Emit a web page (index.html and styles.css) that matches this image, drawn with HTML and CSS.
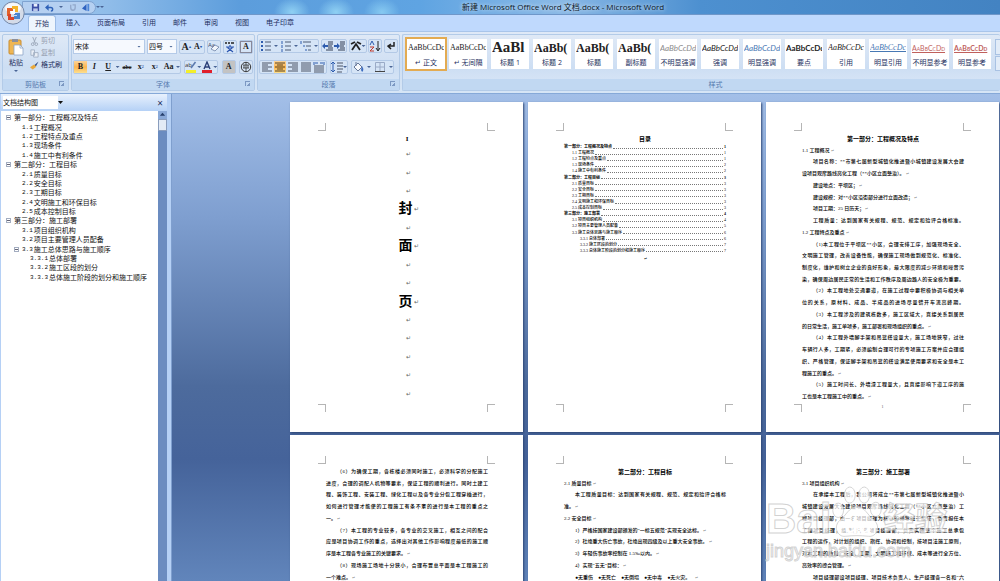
FILE: index.html
```html
<!DOCTYPE html>
<html lang="zh-CN">

<head>
    <meta charset="UTF-8">
    <meta name="viewport" content="width=device-width, initial-scale=1.0">
    <title>新建 Microsoft Office Word 文档.docx - Microsoft Word</title>
    <link rel="stylesheet" href="styles.css">
</head>

<body>
    <header class="top">
        <button class="office" aria-label="Office">
            <svg viewBox="0 0 24 24" width="24" height="24">
                <circle cx="12" cy="12" r="11.2" fill="#d4dbe8" stroke="#7488a8" />
                <ellipse cx="12" cy="7" rx="8" ry="5" fill="#f5f7fb" />
                <path d="M6 7h6v3H9v5H6z" fill="#e2622a" />
                <path d="M11 5h6v6h-3V8h-3z" fill="#f3b52c" />
                <path d="M7 13h3v3h3v3H7z" fill="#d9452a" />
                <path d="M13 12h6v6h-6v-3h3v-1h-3z" fill="#4a86cf" />
                <path d="M10 10h4v3h-4z" fill="#fff" />
            </svg>
        </button>
        <div class="titlebar">
            <div class="quick">
                <button aria-label="保存"><svg viewBox="0 0 10 10" width="9" height="9"><path d="M1 1h8v8H1z" fill="#3b4fa5" /><path d="M3 1h4v3H3z" fill="#e8eefc" /><path d="M2.500 6h5v3h-5z" fill="#b9c7ea" /></svg></button>
                <button aria-label="撤消"><svg viewBox="0 0 10 10" width="9" height="9"><path d="M2 5h4.500q2 0 2 2t-2 2" fill="none" stroke="#2f62b8" stroke-width="1.600" /><path d="M0 5l4-3.500v7z" fill="#2f62b8" /></svg></button>
                <i class="caret"></i>
                <button aria-label="恢复"><svg viewBox="0 0 10 10" width="9" height="9"><path d="M3 2v3q0 3 2.500 3T8 5V2H5" fill="none" stroke="#93a9cb" stroke-width="1.500" /></svg></button>
                <button aria-label="朗读"><svg viewBox="0 0 10 10" width="9" height="9"><path d="M0 6l5-5v8z" fill="#2f62c0" /><path d="M6 1h2v8H6z" fill="#4e86d8" /></svg></button>
                <i class="caret"></i>
            </div>
            <i class="caret more"></i>
            <h1>新建 Microsoft Office Word 文档.docx - Microsoft Word</h1>
        </div>
        <nav class="tabs">
            <a href="#" class="on">开始</a>
            <a href="#">插入</a>
            <a href="#">页面布局</a>
            <a href="#">引用</a>
            <a href="#">邮件</a>
            <a href="#">审阅</a>
            <a href="#">视图</a>
            <a href="#">电子印章</a>
        </nav>
    </header>

    <div class="ribbon">
        <section class="group clipboard">
            <div class="tools">
                <button class="paste">
                    <svg viewBox="0 0 16 18" width="16" height="18"><rect x="1" y="2" width="12" height="14" rx="1" fill="#efb653" stroke="#c98c2f" /><path d="M4 1h6v3H4z" fill="#8c8f9b" /><path d="M6 7h6l3 3v7H6z" fill="#fff" stroke="#8ea4c8" stroke-width=".8" /><path d="M12 7v3h3" fill="none" stroke="#8ea4c8" stroke-width=".8" /></svg>
                    <span>粘贴</span>
                    <i class="caret"></i>
                </button>
                <div class="stack">
                    <button class="off"><svg viewBox="0 0 10 10" width="9" height="9"><path d="M3 0l3 7M7 0L4 7" stroke="#9aa6b8" fill="none" /><circle cx="3" cy="8" r="1.500" fill="none" stroke="#9aa6b8" /><circle cx="7" cy="8" r="1.500" fill="none" stroke="#9aa6b8" /></svg>剪切</button>
                    <button class="off"><svg viewBox="0 0 10 10" width="9" height="9"><path d="M1 1h4v6H1zM4 4h5v5H4z" fill="#e9eef6" stroke="#a3b0c4" /></svg>复制</button>
                    <button><svg viewBox="0 0 10 10" width="9" height="9"><path d="M9.500.500L5 4.500l1.500 1.500z" fill="#2f4e88" /><path d="M4.500 4L7 6.500 3 9.500 0 7z" fill="#e9a93c" /></svg>格式刷</button>
                </div>
            </div>
            <h2>剪贴板<i class="launch"></i></h2>
        </section>

        <section class="group font">
            <div class="tools rows">
                <div class="row">
                    <label class="combo wide"><select aria-label="字体"><option>宋体</option></select><i class="caret"></i></label>
                    <label class="combo"><select aria-label="字号"><option>四号</option></select><i class="caret"></i></label>
                    <div class="set">
                        <button class="serif big">A<sup>▴</sup></button>
                        <button class="serif">A<sup>▾</sup></button>
                    </div>
                    <div class="set"><button aria-label="清除格式"><svg viewBox="0 0 12 12" width="12" height="12"><text x="0" y="6" font-size="6" fill="#3a4a6a">Aa</text><path d="M3 8l4-4 4 2-4 4z" fill="#f2f5fb" stroke="#6a7fa5" stroke-width=".8" /></svg></button></div>
                    <div class="set"><button aria-label="拼音指南"><svg viewBox="0 0 12 12" width="12" height="12"><path d="M1 2h2M4 2h2M7 2h3" stroke="#222" stroke-width="1.500" /><path d="M6 4v1.500M2 6h8M3.500 6.500L9 11M8.500 6.500L3 11" stroke="#2b55b0" stroke-width="1.200" fill="none" /></svg></button></div>
                    <div class="set"><button class="serif boxed">A</button></div>
                </div>
                <div class="row">
                    <div class="set fill">
                        <button class="serif on">B</button>
                        <button class="serif"><em>I</em></button>
                        <button class="serif"><u>U</u></button>
                        <i class="caret"></i>
                        <button class="serif"><s>abc</s></button>
                        <button class="serif">x<sub>2</sub></button>
                        <button class="serif">x<sup>2</sup></button>
                        <button class="serif">Aa</button>
                        <i class="caret"></i>
                    </div>
                    <div class="set">
                        <button aria-label="突出显示"><svg viewBox="0 0 12 12" width="12" height="12"><text x="0" y="6" font-size="6" fill="#333">ab</text><path d="M10.500 1L6 7" stroke="#5b79ad" stroke-width="1.600" /><path d="M1 9h10v3H1z" fill="#f3ee2b" /></svg></button>
                        <i class="caret"></i>
                        <button aria-label="字体颜色"><svg viewBox="0 0 12 12" width="12" height="12"><path d="M3 8l3-7 3 7M4 6h4" fill="none" stroke="#2b3f78" stroke-width="1.400" /><path d="M1 9h10v3H1z" fill="#e0202c" /></svg></button>
                        <i class="caret"></i>
                    </div>
                    <div class="set"><button class="serif shade">A</button></div>
                    <div class="set"><button aria-label="带圈字符"><svg viewBox="0 0 12 12" width="12" height="12"><circle cx="6" cy="6" r="4.700" fill="none" stroke="#333" /><path d="M3 4h6M6 2v8M3 7h6M4 4v3M8 4v3" stroke="#333" stroke-width=".8" /></svg></button></div>
                </div>
            </div>
            <h2>字体<i class="launch"></i></h2>
        </section>

        <section class="group para">
            <div class="tools rows">
                <div class="row">
                    <div class="set fill">
                        <button aria-label="项目符号"><svg viewBox="0 0 12 12" width="12" height="12"><path d="M1 2h2M1 6h2M1 10h2" stroke="#2e5cae" stroke-width="2" /><path d="M5 2h6M5 6h6M5 10h6" stroke="#4c5a74" /></svg></button><i class="caret"></i>
                        <button aria-label="编号"><svg viewBox="0 0 12 12" width="12" height="12"><path d="M2 1v3M2 5v3M2 9v3" stroke="#2e5cae" /><path d="M5 2h6M5 6h6M5 10h6" stroke="#4c5a74" /></svg></button><i class="caret"></i>
                        <button aria-label="多级列表"><svg viewBox="0 0 12 12" width="12" height="12"><path d="M1 1v3M4 5v2M6 9v2" stroke="#2e5cae" /><path d="M3 2h8M6 6h5M8 10h3" stroke="#4c5a74" /></svg></button><i class="caret"></i>
                    </div>
                    <div class="set">
                        <button aria-label="减少缩进量"><svg viewBox="0 0 12 12" width="12" height="12"><path d="M6 2h5M6 4h5M6 6h4M6 8h5M4 10h7" stroke="#333d52" /><path d="M0 6l3-3v2h3v2H3v2z" fill="#2e5cae" /></svg></button>
                        <button aria-label="增加缩进量"><svg viewBox="0 0 12 12" width="12" height="12"><path d="M6 2h5M6 4h5M6 6h4M6 8h5M4 10h7" stroke="#333d52" /><path d="M6 6L3 3v2H0v2h3v2z" fill="#2e5cae" /></svg></button>
                    </div>
                    <div class="set"><button aria-label="中文版式"><svg viewBox="0 0 12 12" width="12" height="12"><path d="M1 4l4-2M11 4L7 2M2 10l4-6 4 6" fill="none" stroke="#222" stroke-width="1.800" /></svg></button><i class="caret"></i></div>
                    <div class="set"><button aria-label="排序"><svg viewBox="0 0 12 12" width="12" height="12"><path d="M1 5l2-4 2 4" fill="none" stroke="#2e5cae" /><path d="M1 7h4l-4 4h4" fill="none" stroke="#c0392b" /><path d="M9 1v9M7 8l2 3 2-3" fill="none" stroke="#222" /></svg></button></div>
                    <div class="set"><button aria-label="编辑标记"><svg viewBox="0 0 12 12" width="12" height="12"><path d="M9 2v4H4M6 4L3 6l3 3" fill="none" stroke="#222" stroke-width="1.500" /></svg></button></div>
                </div>
                <div class="row start">
                    <div class="set align">
                        <button aria-label="左对齐"><svg viewBox="0 0 12 12" width="12" height="12"><path d="M1 2h10M1 4h6M1 6h10M1 8h6M1 10h10" stroke="#4c5566" /></svg></button>
                        <button aria-label="居中" class="on"><svg viewBox="0 0 12 12" width="12" height="12"><path d="M1 2h10M3 4h6M1 6h10M3 8h6M1 10h10" stroke="#5a4420" /></svg></button>
                        <button aria-label="右对齐"><svg viewBox="0 0 12 12" width="12" height="12"><path d="M1 2h10M5 4h6M1 6h10M5 8h6M1 10h10" stroke="#4c5566" /></svg></button>
                        <button aria-label="两端对齐"><svg viewBox="0 0 12 12" width="12" height="12"><path d="M1 2h10M1 4h10M1 6h10M1 8h10M1 10h10" stroke="#4c5566" /></svg></button>
                        <button aria-label="分散对齐"><svg viewBox="0 0 12 12" width="12" height="12"><path d="M1 5h10M1 7h10M1 9h10M1 11h10" stroke="#4c5566" /><path d="M1 1v3M11 1v3M2 2h3M7 2h3" stroke="#2e5cae" /></svg></button>
                    </div>
                    <div class="set"><button aria-label="行距"><svg viewBox="0 0 12 12" width="12" height="12"><path d="M2 1v10M0 3l2-2 2 2M0 9l2 2 2-2" fill="none" stroke="#2e5cae" /><path d="M6 2h6M6 5h6M6 8h6M6 11h5" stroke="#4c5566" /></svg></button><i class="caret"></i></div>
                    <div class="set pair">
                        <button aria-label="底纹"><svg viewBox="0 0 12 12" width="12" height="12"><path d="M2 6l4-4 4 4-4 4z" fill="#f7f9fd" stroke="#68799a" /><path d="M4 1v4" stroke="#68799a" /><path d="M10 5q2 3 1 5t-2-1z" fill="#3c6cc0" /></svg></button><i class="caret"></i>
                        <button aria-label="边框"><svg viewBox="0 0 12 12" width="12" height="12"><path d="M1.500 1.500h9v9h-9zM6 1.500v9M1.500 6h9" fill="none" stroke="#9aaac6" /><path d="M1 10.500h10" stroke="#444" /></svg></button><i class="caret"></i>
                    </div>
                </div>
            </div>
            <h2>段落<i class="launch"></i></h2>
        </section>

        <section class="group styles">
            <div class="gallery">
                <button class="style on"><span class="sample">AaBbCcDc</span><span>↵ 正文</span></button>
                <button class="style"><span class="sample">AaBbCcDc</span><span>↵ 无间隔</span></button>
                <button class="style"><span class="sample h1">AaBl</span><span>标题 1</span></button>
                <button class="style"><span class="sample h2">AaBb(</span><span>标题 2</span></button>
                <button class="style"><span class="sample h2">AaBb(</span><span>标题</span></button>
                <button class="style"><span class="sample h2">AaBb(</span><span>副标题</span></button>
                <button class="style"><span class="sample sans it grey">AaBbCcDd</span><span>不明显强调</span></button>
                <button class="style"><span class="sample sans it">AaBbCcDd</span><span>强调</span></button>
                <button class="style"><span class="sample sans it blue">AaBbCcDd</span><span>明显强调</span></button>
                <button class="style"><span class="sample sans bold">AaBbCcDd</span><span>要点</span></button>
                <button class="style"><span class="sample it">AaBbCcDc</span><span>引用</span></button>
                <button class="style"><span class="sample it blue line">AaBbCcDc</span><span>明显引用</span></button>
                <button class="style"><span class="sample sans caps red line">AaBbCcDd</span><span>不明显参考</span></button>
                <button class="style"><span class="sample sans caps red deep line">AaBbCcDd</span><span>明显参考</span></button>
                <div class="scroll"><i></i><i></i></div>
            </div>
            <h2>样式</h2>
        </section>
    </div>

    <main class="work">
        <aside class="map">
            <div class="map-head">
                <label class="pick"><select aria-label="窗格"><option>文档结构图</option></select></label>
                <i class="caret"></i>
                <button class="close" aria-label="关闭">×</button>
            </div>
            <div class="map-body">
                <ul class="tree">
                    <li><b class="box"></b>第一部分：工程概况及特点</li>
                    <li class="l2"><span>1.1</span>工程概况</li>
                    <li class="l2"><span>1.2</span>工程特点及重点</li>
                    <li class="l2"><span>1.3</span>现场条件</li>
                    <li class="l2"><span>1.4</span>施工中有利条件</li>
                    <li><b class="box"></b>第二部分：工程目标</li>
                    <li class="l2"><span>2.1</span>质量目标</li>
                    <li class="l2"><span>2.2</span>安全目标</li>
                    <li class="l2"><span>2.3</span>工期目标</li>
                    <li class="l2"><span>2.4</span>文明施工和环保目标</li>
                    <li class="l2"><span>2.5</span>成本控制目标</li>
                    <li><b class="box"></b>第三部分：施工部署</li>
                    <li class="l2"><span>3.1</span>项目组织机构</li>
                    <li class="l2"><span>3.2</span>项目主要管理人员配备</li>
                    <li class="l2 open"><b class="box"></b><span>3.3</span>施工总体思路与施工顺序</li>
                    <li class="l3"><span>3.3.1</span>总体部署</li>
                    <li class="l3"><span>3.3.2</span>施工区段的划分</li>
                    <li class="l3"><span>3.3.3</span>总体施工阶段的划分和施工顺序</li>
                </ul>
                <div class="bar"><i class="up"></i><i class="thumb"></i></div>
            </div>
        </aside>

        <div class="canvas">
            <article class="page">
                <div class="marks"><i></i><i></i></div>
                <div class="cover">
                    <p class="cursor">I</p>
                    <p>↵</p>
                    <p>↵</p>
                    <p>↵</p>
                    <p><b>封</b>↵</p>
                    <p>↵</p>
                    <p><b>面</b>↵</p>
                    <p>↵</p>
                    <p>↵</p>
                    <p><b>页</b>↵</p>
                    <p>↵</p>
                    <p>↵</p>
                    <p>↵</p>
                    <p>↵</p>
                    <p>↵</p>
                </div>
                <div class="marks end"><i></i><i></i></div>
            </article>

            <article class="page">
                <div class="marks"><i></i><i></i></div>
                <div class="contents">
                    <h3>目录</h3>
                    <ol class="toc">
                        <li class="t1">第一部分：工程概况及特点<i></i>1</li>
                        <li class="t2">1.1 工程概况<i></i>1</li>
                        <li class="t2">1.2 工程特点及重点<i></i>1</li>
                        <li class="t2">1.3 现场条件<i></i>2</li>
                        <li class="t2">1.4 施工中有利条件<i></i>2</li>
                        <li class="t1">第二部分：工程目标<i></i>3</li>
                        <li class="t2">2.1 质量目标<i></i>3</li>
                        <li class="t2">2.2 安全目标<i></i>3</li>
                        <li class="t2">2.3 工期目标<i></i>3</li>
                        <li class="t2">2.4 文明施工和环保目标<i></i>3</li>
                        <li class="t2">2.5 成本控制目标<i></i>3</li>
                        <li class="t1">第三部分：施工部署<i></i>4</li>
                        <li class="t2">3.1 项目组织机构<i></i>4</li>
                        <li class="t2">3.2 项目主要管理人员配备<i></i>5</li>
                        <li class="t2">3.3 施工总体思路与施工顺序<i></i>6</li>
                        <li class="t3">3.3.1 总体部署<i></i>6</li>
                        <li class="t3">3.3.2 施工区段的划分<i></i>7</li>
                        <li class="t3">3.3.3 总体施工阶段的划分和施工顺序<i></i>7</li>
                    </ol>
                    <p class="ret">↵</p>
                </div>
                <div class="marks end"><i></i><i></i></div>
            </article>

            <article class="page">
                <div class="marks"><i></i><i></i></div>
                <div class="text">
                    <h3>第一部分：工程概况及特点</h3>
                    <p>1.1 工程概况</p>
                    <p class="in full">项目名称：**市第七届新型城镇化推进暨小城镇建设发展大会建</p>
                    <p>设项目观摩路线亮化工程（**小区立面整治）。</p>
                    <p class="in">建设地点：平坝区；</p>
                    <p class="in">建设规模：对**小区沿街部分进行立面改造；</p>
                    <p class="in">项目工期：25 日历天；</p>
                    <p class="in full">工程质量：达到国家有关规程、规范、规定和验评合格标准。</p>
                    <p>1.2 工程特点及重点</p>
                    <p class="in full">（1)本工程位于平坝区**小区，合理安排工序，加强现场安全、</p>
                    <p class="full">文明施工管理，改善设备性能，确保施工现场做到规范化、标准化、</p>
                    <p class="full">制度化，维护和树立企业的良好形象，最大限度的减少环境和噪音污</p>
                    <p class="full">染，确保周边居民正常的生活和工作秩序及周边路人的安全极为重要。</p>
                    <p class="in full">（2）本工程地处交通要道，在施工过程中要积极协调与相关单</p>
                    <p class="full">位的关系，原材料、成品、半成品的进场尽量错开车流高峰期。</p>
                    <p class="in full">（3）本工程涉及的建筑栋数多，施工区域大，直接关系到居民</p>
                    <p>的日常生活，施工单项多，施工部署和现场组织的重点。</p>
                    <p class="in full">（4）本工程外墙脚手架和吊篮搭设量大，施工场地狭窄，过往</p>
                    <p class="full">车辆行人多，工期紧，必须编制合理可行的专项施工方案并应合理组</p>
                    <p class="full">织、严格管理，保证脚手架和吊篮的搭设满足使用要求和安全是本工</p>
                    <p>程施工的重点。</p>
                    <p class="in full">（5）施工时间长、外墙漆工程量大，且直接影响下道工序的施</p>
                    <p>工也是本工程施工中的重点。</p>
                </div>
                <div class="marks end"><i></i><span>1</span><i></i></div>
            </article>

            <article class="page">
                <div class="marks"><i></i><i></i></div>
                <div class="text">
                    <p class="in full">（6）为确保工期，各栋楼必须同时施工，必须科学的分配施工</p>
                    <p class="full">进度，合理的调配人机物等要素，保证工程的顺利进行。同时土建工</p>
                    <p class="full">程、装饰工程、安装工程、绿化工程以及各专业分包工程穿插进行，</p>
                    <p class="full">如何进行管理才能使的工程施工有条不紊的进行是本工程的重点之</p>
                    <p>一。</p>
                    <p class="in full">（7）本工程的专业较多，各专业的交叉施工，相互之间的配合</p>
                    <p class="full">应是项目协调工作的重点，选择出对其他工作影响程度最低的施工顺</p>
                    <p>序是本工程各专业施工的关键要求。</p>
                    <p class="in full">（8）现场施工场地十分狭小，合理布置总平面是本工程施工的</p>
                    <p>一个难点。</p>
                </div>
            </article>

            <article class="page">
                <div class="marks"><i></i><i></i></div>
                <div class="text">
                    <h3>第二部分：工程目标</h3>
                    <p>2.1 质量目标</p>
                    <p class="in full">本工程质量目标：达到国家有关规程、规范、规定和验评合格标</p>
                    <p>准。</p>
                    <p>2.2 安全目标</p>
                    <p class="in">1）严格按国家建设部颁发的“一标五规范”实现安全达标。</p>
                    <p class="in">2）杜绝重大伤亡事故，杜绝出现四级及以上重大安全事故。</p>
                    <p class="in">3）年轻伤事故率控制在 1.5‰以内。</p>
                    <p class="in">4）实现“五无”目标：</p>
                    <p class="in dots"><span>●无重伤</span><span>●无死亡</span><span>●无倒塌</span><span>●无中毒</span><span>●无火灾。</span></p>
                </div>
            </article>

            <article class="page">
                <div class="marks"><i></i><i></i></div>
                <div class="text">
                    <h3>第三部分：施工部署</h3>
                    <p>3.1 项目组织机构</p>
                    <p class="in full">在承接本工程后，我公司将成立**市第七届新型城镇化推进暨小</p>
                    <p class="full">城镇建设发展大会建设项目观摩路线亮化工程（**小区立面整治）工</p>
                    <p class="full">程项目经理部，由一名项目经理为核心的领导班子组成，负责担任本</p>
                    <p class="full">工程项目经理，组建精干的项目经理部，负责实施整个施工总承包</p>
                    <p class="full">工程的运作，对计划的组织、指挥、协调和控制，按项目法施工原则，</p>
                    <p class="full">对本工程的质量、安全、工期、文明施工和环保、成本等进行全方位、</p>
                    <p>高效率的综合管理。</p>
                    <p class="in full">项目经理部设项目经理、项目技术负责人、生产经理各一名和“六</p>
                </div>
            </article>

            <div class="watermark">
                <div class="brand">
                    <span>Bai</span>
                    <svg viewBox="0 0 58 62" width="52" height="56">
                        <g fill="#fff" fill-opacity=".7" stroke="#c4c4c4" stroke-opacity=".8">
                            <ellipse cx="8" cy="28" rx="6" ry="8" />
                            <ellipse cx="21" cy="11" rx="6" ry="9" />
                            <ellipse cx="37" cy="11" rx="6" ry="9" />
                            <ellipse cx="50" cy="27" rx="6" ry="8" />
                            <path d="M29 24c9 0 12 10 19 15 8 7 3 19-6 18-9-1-17-1-26 0-9 1-14-11-6-18 7-5 10-15 19-15z" />
                        </g>
                        <text x="15" y="53" class="du">du</text>
                    </svg>
                    <span class="cn">经验</span>
                </div>
                <div class="site">jingyan.baidu.com</div>
            </div>
        </div>
    </main>
</body>

</html>
```

FILE: styles.css
```css
* {
    box-sizing: border-box;
    margin: 0;
    padding: 0;
}

body {
    display: flex;
    flex-direction: column;
    height: 100vh;
    overflow: hidden;
    font: 7px/10px "Open Sans", "Noto Sans CJK SC", sans-serif;
    color: #1d2f5e;
    background: #bfdbff;
}

button {
    display: flex;
    align-items: center;
    justify-content: center;
    border: 0;
    background: none;
    font: inherit;
    color: inherit;
}

i, em {
    font-style: normal;
}

em {
    font-style: italic;
}

ul, ol {
    list-style: none;
}

a {
    color: inherit;
    text-decoration: none;
}

.caret {
    flex: none;
    width: 4px;
    height: 2px;
    background: #4a6596;
    clip-path: polygon(0 0, 100% 0, 50% 100%);
}

/* title bar and tabs */
.top {
    position: relative;
    flex: none;
}

.office {
    position: absolute;
    left: 1px;
    top: 1px;
    z-index: 2;
}

.titlebar {
    display: flex;
    align-items: center;
    height: 15px;
    padding-left: 22px;
    border-bottom: 1px solid #6f97c9;
    background:
        radial-gradient(ellipse 18px 14px at 292px 12px, #8fd0f3, transparent),
        radial-gradient(ellipse 18px 14px at 336px 12px, #8fd0f3, transparent),
        radial-gradient(ellipse 18px 14px at 382px 12px, #86c9f1, transparent),
        linear-gradient(90deg, #a9cdf0 0, #8fbce9 110px, #5c9ddc 240px, #5fa4e2 420px, #8ab9e6 560px, #4d90d0 700px, #4383c2 1000px);
}

.quick {
    display: flex;
    align-items: center;
    gap: 5px;
    height: 13px;
    width: 74px;
    padding-left: 8px;
    border: 1px solid #7fa3d1;
    border-radius: 0 7px 7px 0;
    background: #b5d0f1;
}

.more {
    margin-left: 4px;
}

h1 {
    flex: 1;
    padding-left: 22px;
    font-size: 8px;
    font-weight: 400;
    line-height: 14px;
    text-align: center;
    color: #0d1828;
    text-shadow: 0 0 4px #fff;
}

.tabs {
    display: flex;
    gap: 3px;
    height: 16px;
    padding-left: 28px;
    line-height: 15px;
    background: #bfd9fd;
}

.tabs a {
    padding: 0 7px;
}

.tabs .on {
    border: 1px solid #9dbce6;
    border-bottom: 0;
    border-radius: 3px 3px 0 0;
    padding: 0 6px;
    background: #eef5fd;
}

/* ribbon */
.ribbon {
    display: flex;
    flex: none;
    gap: 2px;
    height: 63px;
    padding: 2px 0 2px 2px;
    border-top: 1px solid #a9c5ea;
    border-bottom: 1px solid #86a9d8;
    background: linear-gradient(#dfe9f7, #cfdff3 50%, #d6e5f6);
}

.group {
    display: flex;
    flex-direction: column;
    border: 1px solid #b3cbe8;
    border-radius: 2px;
    background: linear-gradient(#dfe9f6, #cddef3 60%, #dbe8f7);
}

.clipboard {
    width: 67px;
}

.font {
    width: 184px;
}

.para {
    width: 143px;
}

.styles {
    flex: 1;
    min-width: 0;
    border-right: 0;
}

h2 {
    position: relative;
    height: 11px;
    font-size: 7px;
    font-weight: 400;
    line-height: 11px;
    text-align: center;
    color: #5478ae;
    background: #c1d8f2;
}

.launch {
    position: absolute;
    right: 4px;
    top: 2px;
    width: 5px;
    height: 5px;
    border-top: 1px solid #7c98c2;
    border-left: 1px solid #7c98c2;
    background: linear-gradient(135deg, transparent 60%, #7c98c2 60%);
}

.tools {
    flex: 1;
    display: flex;
}

.paste {
    flex-direction: column;
    gap: 2px;
    width: 26px;
    padding-bottom: 4px;
}

.stack {
    display: flex;
    flex-direction: column;
    justify-content: space-between;
    padding: 1px 0 9px;
}

.stack button {
    justify-content: start;
    gap: 2px;
    padding-left: 1px;
}

.off {
    color: #97a0b0;
}

.rows {
    flex-direction: column;
    justify-content: space-between;
    padding: 4px 1px 5px;
}

.row {
    display: flex;
    justify-content: space-between;
    align-items: center;
}

.start {
    justify-content: start;
    gap: 3px;
}

.combo {
    display: flex;
    align-items: center;
    width: 30px;
    height: 15px;
    padding: 0 3px 0 1px;
    border: 1px solid #b4cae8;
    background: #f6f9fe;
}

.wide {
    width: 72px;
}

select {
    flex: 1;
    min-width: 0;
    border: 0;
    appearance: none;
    background: none;
    font: inherit;
    color: #111;
}

.set {
    display: flex;
    align-items: center;
    height: 14px;
    border: 1px solid #b3c9e6;
    border-radius: 2px;
    background: #d5e4f6;
}

.set button {
    width: 12px;
    height: 12px;
}

.set .on {
    background: linear-gradient(#fbd49a, #fbb550 50%, #fddf8e);
}

.font .fill {
    gap: 1px;
    width: 108px;
}

.font .fill button {
    flex: 1;
}

.serif {
    font: bold 8px/10px "Liberation Serif", serif;
    color: #222;
}

.serif sup,
.serif sub {
    font-size: 4px;
    line-height: 4px;
    color: #2e5cae;
}

.serif s {
    font-size: 6px;
}

.set .big {
    font-size: 10px;
}

.boxed {
    border: 1px solid #889;
}

.shade {
    background: #c3c3c3;
}

.para .fill {
    gap: 2px;
}

.align {
    gap: 1px;
    padding: 0 1px;
}

.pair {
    gap: 3px;
}

/* style gallery */
.gallery {
    flex: 1;
    display: flex;
    gap: 4px;
    padding: 4px 0 0 4px;
    overflow: hidden;
}

.style {
    flex: none;
    flex-direction: column;
    justify-content: space-between;
    width: 38px;
    height: 30px;
    padding-bottom: 1px;
    background: #fff;
    white-space: nowrap;
}

.styles .on {
    outline: 2px solid #e3ab52;
}

.sample {
    width: 36px;
    height: 16px;
    overflow: hidden;
    font: 8px/18px "Liberation Serif", serif;
    text-align: left;
    color: #222;
}

.h1 {
    font-size: 15px;
    font-weight: 700;
    line-height: 16px;
}

.h2 {
    font-size: 12px;
    font-weight: 700;
}

.sans {
    font-family: Lato, sans-serif;
}

.it {
    font-style: italic;
}

.bold {
    font-weight: 700;
}

.caps {
    font-size: 7px;
    font-variant: small-caps;
}

.grey {
    color: #8b8b8b;
}

.blue {
    color: #4778b4;
}

.red {
    color: #c0605c;
}

.deep {
    font-weight: 700;
}

.line {
    text-decoration: underline;
}

.scroll {
    flex: none;
    display: flex;
    flex-direction: column;
    gap: 1px;
    width: 8px;
    height: 32px;
}

.scroll i {
    flex: 1;
    border: 1px solid #a9c2e3;
    background: #e2ecf8;
}

.styles h2 {
    padding-left: 28px;
}

/* document map */
.work {
    flex: 1;
    display: flex;
    min-height: 0;
}

.map {
    flex: none;
    display: flex;
    flex-direction: column;
    width: 172px;
    padding: 0 4px 0 1px;
    border-right: 1px solid #7f9fce;
    background: #b5d0f5;
}

.map-head {
    display: flex;
    align-items: center;
    height: 17px;
    padding: 0 4px 0 2px;
    background: linear-gradient(#e8f1fd, #b5d1f6);
}

.map-head .caret {
    width: 5px;
    height: 3px;
    background: #111;
}

.pick {
    display: flex;
    width: 55px;
    height: 13px;
    background: #fff;
}

.close {
    margin-left: auto;
    font-size: 10px;
}

.map-body {
    flex: 1;
    display: flex;
    background: #fff;
}

.tree {
    flex: 1;
    display: grid;
    grid-auto-rows: 1fr;
    height: 169px;
    margin-top: 2px;
    padding-left: 5px;
    line-height: 9px;
    color: #111;
}

.tree li {
    display: flex;
    align-items: center;
    white-space: nowrap;
}

.tree span {
    padding-right: 1px;
    font: 6px/9px "Liberation Mono", monospace;
}

.box {
    width: 5px;
    height: 5px;
    margin-right: 3px;
    border: 1px solid #a3adc0;
    background: linear-gradient(#667 0 0) center / 3px 1px no-repeat;
}

.tree .l2 {
    padding-left: 16px;
}

.tree .open {
    padding-left: 8px;
}

.tree .l3 {
    padding-left: 24px;
}

.bar {
    width: 9px;
    background: #6b8cc0;
}

.up,
.thumb {
    display: block;
    height: 8px;
    background: #8aa9d8;
}

.up::before {
    content: "";
    display: block;
    height: 6px;
    background: #263f6c;
    clip-path: polygon(50% 30%, 80% 80%, 20% 80%);
}

.thumb {
    height: 12px;
    border: 1px solid #8a9dbd;
    background: #e3ebf6;
}

/* pages */
.canvas {
    position: relative;
    flex: 1;
    display: grid;
    grid-template-columns: repeat(3, 233px);
    grid-auto-rows: 330px;
    gap: 3px 5px;
    justify-content: end;
    padding: 8px 1px 0 0;
    overflow: hidden;
    background: linear-gradient(#a3bfe8, #7f9fd0 25%, #4d6b9d 60%, #45639a 75%, #6185bb);
}

.page {
    padding: 21px 28px 0;
    background: #fff;
    box-shadow: 1px 1px 2px #2d4674;
    font: 500 5px/10px "Liberation Serif", "Noto Sans CJK SC", serif;
    color: #000;
}

.marks {
    display: flex;
    justify-content: space-between;
    height: 8px;
}

.marks i {
    width: 8px;
    border: solid #b5b5b5;
    border-width: 0 1px 1px 0;
}

.marks i:last-child {
    border-width: 0 0 1px 1px;
}

.end i {
    border-width: 1px 1px 0 0;
}

.end i:last-child {
    border-width: 1px 0 0 1px;
}

.end span {
    line-height: 6px;
    color: #777;
}

.text,
.cover,
.contents {
    height: 270px;
    margin: 2px 7px 1px 8px;
}

.text {
    display: grid;
    grid-template-rows: repeat(23, 1fr);
    align-items: center;
    white-space: nowrap;
}

.text p:not(.full)::after {
    content: " ↵";
    font-size: 4px;
    color: #888;
}

h3 {
    font-size: 6px;
    line-height: 10px;
    text-align: center;
}

.in {
    padding-left: 11px;
}

.full {
    text-align-last: justify;
}

.dots {
    display: flex;
    gap: 5px;
}

.cover {
    display: grid;
    grid-template-rows: 12px repeat(14, 1fr);
    align-items: center;
    text-align: center;
    font-size: 6px;
    color: #666;
}

.cover p {
    display: flex;
    align-items: center;
    justify-content: center;
    gap: 1px;
    padding-left: 3px;
}

.cover b {
    font-size: 14px;
    color: #000;
}

.cover .cursor {
    padding: 0;
    font-size: 7px;
    font-weight: 700;
    color: #000;
}

.contents h3 {
    height: 11px;
    line-height: 12px;
}

.toc {
    display: grid;
    grid-auto-rows: 1fr;
    height: 110px;
    font-size: 4px;
    line-height: 6px;
}

.toc li {
    display: flex;
    align-items: center;
}

.toc i {
    flex: 1;
    height: 3px;
    margin: 0 1px;
    border-bottom: 1px dotted #777;
}

.t1 {
    font-weight: 700;
}

.toc .t2 {
    padding-left: 8px;
}

.toc .t3 {
    padding-left: 16px;
}

.ret {
    font-size: 4px;
    text-align: center;
}

/* watermark */
.watermark {
    position: absolute;
    right: 44px;
    bottom: 20px;
    width: 190px;
    font-family: "Liberation Sans", "Noto Sans CJK SC", sans-serif;
    color: rgba(255, 255, 255, .7);
    -webkit-text-stroke: 1px rgba(180, 180, 180, .6);
}

.brand {
    display: flex;
    align-items: end;
    font-size: 42px;
    font-weight: 700;
    line-height: 44px;
}

.cn {
    font-size: 32px;
}

.du {
    font-size: 25px;
    font-weight: 700;
    fill: #fff;
}

.site {
    font-size: 18px;
    line-height: 20px;
}
```
